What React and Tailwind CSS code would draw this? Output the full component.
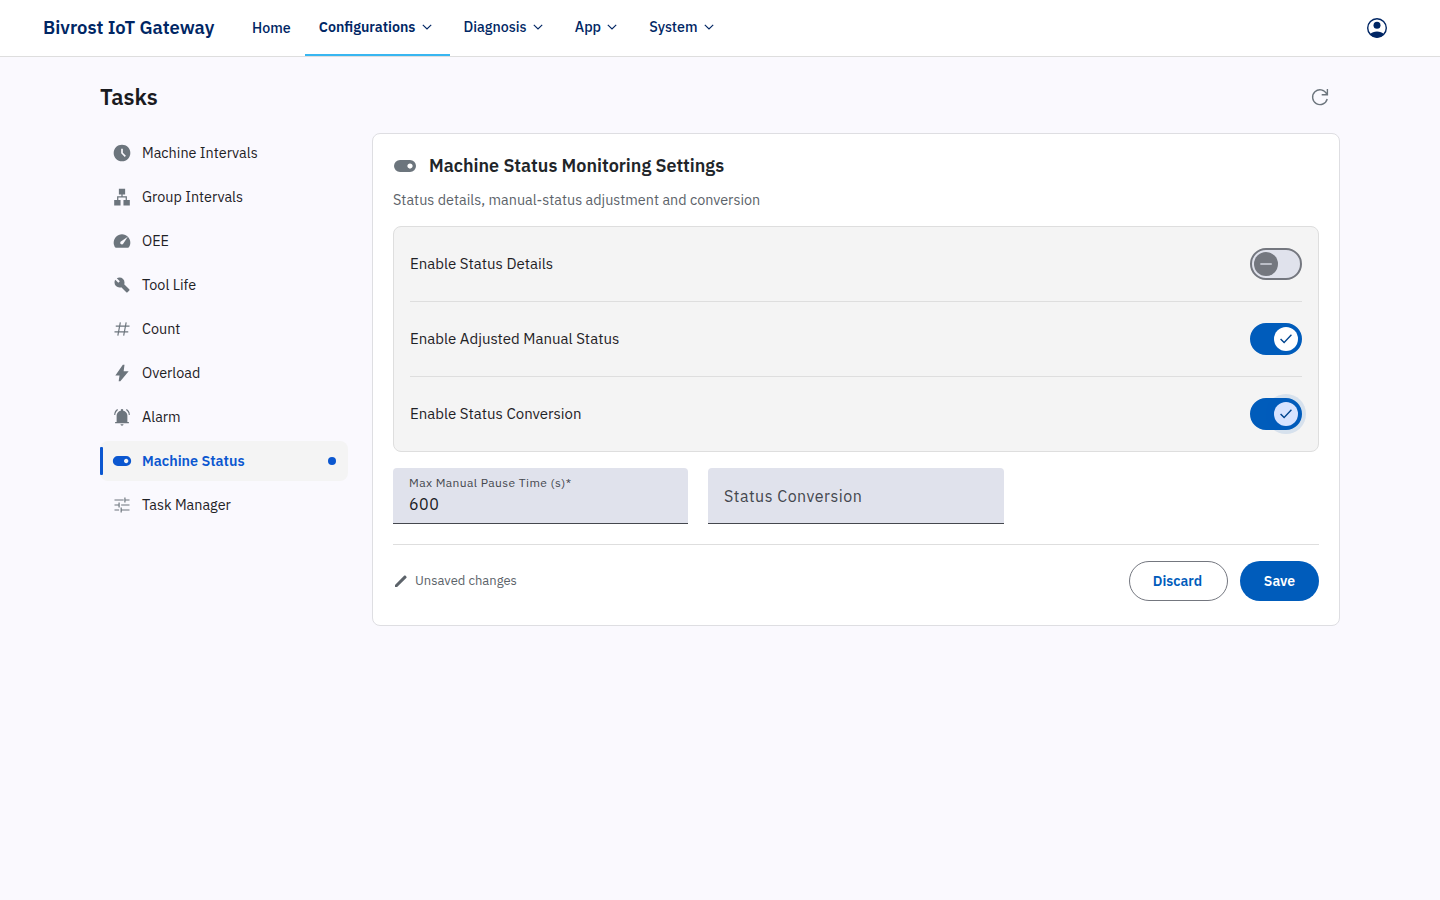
import { useState } from "react";
import clsx from "clsx";

// 960-unit glyphs, y axis runs from -960 to 0
const ICONS = {
  schedule:
    "m612-292 56-56-148-148v-184h-80v216l172 172ZM480-80q-83 0-156-31.5T197-197q-54-54-85.5-127T80-480q0-83 31.5-156T197-763q54-54 127-85.5T480-880q83 0 156 31.5T763-763q54 54 85.5 127T880-480q0 83-31.5 156T763-197q-54 54-127 85.5T480-80Z",
  lan: "M105-70v-270h140v-175h205v-85H330v-280h300v280H510v85h205v175h140v270H550v-270h105v-115H305v115h105v270H105Z",
  speed:
    "M418-340q24 24 62 23.5t56-27.5l224-336-336 224q-27 18-28.5 55t22.5 61ZM204-160q-22 0-40.5-9.5T134-198q-26-47-40-97.5T80-400q0-83 31.5-156T197-683q54-54 127-85.5T480-800t155.5 31.5T762-683t86 128 32 154q0 54-13 104t-41 97q-11 18-30 28.5T755-160H204Z",
  build:
    "M686-132 444-376q-20 8-40.5 12t-43.5 4q-100 0-170-70t-70-170q0-36 10-68.5t28-61.5l146 146 72-72-146-146q29-18 61.5-28t68.5-10q100 0 170 70t70 170q0 23-4 43.5T584-516l244 242q12 12 12 29t-12 29l-84 84q-12 12-29 12t-29-12Z",
  bolt: "m320-80 40-280H160l360-520h80l-40 320h240L400-80h-80Z",
  alarm:
    "M105-580q0-95 41-171T255-862l34 42q-58 43-93 106T155-580h-50Zm700 0q0-81-35-134T671-820l34-42q68 45 109 111t41 171h-50ZM150-180v-60h72v-310q0-85 55-150t146-82v-33q0-23 17-39t40-16 40 16 17 39v33q91 17 146 82t55 150v310h72v60H150ZM480-65q-30 0-51-21t-21-51h144q0 30-21 51t-51 21Z",
  toggle:
    "M280-240q-100 0-170-70T40-480t70-170 170-70h400q100 0 170 70t70 170-70 170-170 70H280Zm400-135q44 0 74.5-30.5T785-480t-30.5-74.5T680-585t-74.5 30.5T575-480t30.5 74.5T680-375Z",
  edit: "M120-120v-125l545-545q10-10 22-15t25-5q13 0 25 5t21 15l37 37q10 10 15 22t5 24q0 13-5 25.5T795-659L245-120H120Z",
};

// outline glyphs on a 24 grid
const LINES = {
  hash: "M4.5 8.5h16.500M3 15.500h16.500M10 4 7 20M17 4l-3 16",
  tune: "M3 6h11M15.5 3v6M15.5 6H21M3 12h5.5M8.5 9v6M11 12h10M3 18h5.5M11 15v6M11 18h10",
};

function Icon({ name, className }) {
  if (LINES[name]) {
    return (
      <svg viewBox="0 0 24 24" fill="none" stroke="currentColor" strokeWidth="1.4" className={className}>
        <path d={LINES[name]} />
      </svg>
    );
  }
  return (
    <svg viewBox="0 -960 960 960" fill="currentColor" className={className}>
      <path d={ICONS[name]} />
    </svg>
  );
}

const NAV = ["Configurations", "Diagnosis", "App", "System"];

const TASKS = [
  { label: "Machine Intervals", icon: "schedule" },
  { label: "Group Intervals", icon: "lan" },
  { label: "OEE", icon: "speed" },
  { label: "Tool Life", icon: "build" },
  { label: "Count", icon: "hash" },
  { label: "Overload", icon: "bolt" },
  { label: "Alarm", icon: "alarm" },
  { label: "Machine Status", icon: "toggle", dirty: true },
  { label: "Task Manager", icon: "tune" },
];

function NavBar() {
  return (
    <header className="flex h-[57px] items-stretch border-b border-[#dedede] bg-white pl-[43px] pr-[51px] text-[#002664]">
      <div className="flex w-[195px] items-center text-[18.4px] font-semibold">Bivrost IoT Gateway</div>
      <nav className="flex text-[14.25px] font-medium">
        <a className="flex w-[66.8px] items-center pl-3.5">Home</a>
        {NAV.map((item) => (
          <a
            key={item}
            className={clsx(
              "flex items-center gap-[2.1px] border-b-2 px-3.5",
              item === "Configurations" ? "border-[#38b6f1] font-semibold" : "border-transparent"
            )}
          >
            {item}
            <svg viewBox="0 0 18 18" fill="none" stroke="currentColor" strokeWidth="1.15" className="size-[18px]">
              <path d="m4.8 6.8 4.2 4.2 4.2-4.2" />
            </svg>
          </a>
        ))}
      </nav>
      <button className="ml-auto">
        <svg viewBox="0 0 24 24" fill="currentColor" className="size-6">
          <circle cx="12" cy="12" r="9.3" fill="none" stroke="currentColor" strokeWidth="1.4" />
          <circle cx="12" cy="9.3" r="3.5" />
          <path d="M5 18.2c1.700-1.700 4.200-2.600 7-2.600s5.300.9 7 2.600A9.300 9.300 0 0 1 12 21.500a9.300 9.300 0 0 1-7-3.300Z" />
        </svg>
      </button>
    </header>
  );
}

function Sidebar({ active, onSelect }) {
  return (
    <aside className="flex w-[248px] flex-col gap-1">
      {TASKS.map((t) => {
        const on = t.label === active;
        return (
          <button
            key={t.label}
            onClick={() => onSelect(t.label)}
            className={clsx(
              "flex h-10 items-center rounded-lg pr-3 text-left text-[14.4px]",
              on ? "bg-[#f4f4f4] font-semibold text-[#0b57d0]" : "text-[#1f2226]"
            )}
          >
            <span className={clsx("h-7 w-[3px] rounded-[1px]", on && "bg-[#0b57d0]")} />
            <Icon name={t.icon} className={clsx("ml-[9px] mr-2.5 size-5", !on && "text-[#6c757d]")} />
            {t.label}
            {t.dirty && <span className="ml-auto size-2 rounded-full bg-[#0b57d0]" />}
          </button>
        );
      })}
    </aside>
  );
}

function Toggle({ on, focused, onChange }) {
  return (
    <button
      role="switch"
      aria-checked={on}
      onClick={onChange}
      className={clsx(
        "flex h-8 w-[52px] items-center rounded-full border-2 px-0.5",
        on ? "justify-end border-[#005cbb] bg-[#005cbb]" : "border-[#74777f] bg-[#e0e2ec]"
      )}
    >
      <span
        className={clsx(
          "flex size-6 items-center justify-center rounded-full",
          !on && "bg-[#74777f] text-[#e0e2ec]",
          on && "text-[#00458f]",
          on && (focused ? "bg-[#d7e3ff] shadow-[0_0_0_8px_rgba(0,92,187,0.12)]" : "bg-white")
        )}
      >
        <svg viewBox="0 0 24 24" fill="currentColor" className="size-4">
          <path d={on ? "M9.2 18.8 3.100 12.700 4.600 11.200 9.200 15.800 19.400 5 20.900 6.500Z" : "M3.500 11h17v2h-17Z"} />
        </svg>
      </span>
    </button>
  );
}

function Settings() {
  const [flags, setFlags] = useState([
    { label: "Enable Status Details", on: false },
    { label: "Enable Adjusted Manual Status", on: true },
    { label: "Enable Status Conversion", on: true, focused: true },
  ]);

  const flip = (i) => setFlags(flags.map((f, j) => (j === i ? { ...f, on: !f.on } : f)));

  return (
    <section className="h-[493px] w-[968px] rounded-lg border border-[#dedee2] bg-white px-5 pt-5">
      <div className="flex h-6 items-center gap-3">
        <Icon name="toggle" className="size-6 text-[#6c757d]" />
        <h2 className="pb-0.5 text-[18px] font-semibold text-[#212529]">Machine Status Monitoring Settings</h2>
      </div>
      <p className="mt-[11px] text-[14.4px] leading-[22px] text-[#5c636a]">
        Status details, manual-status adjustment and conversion
      </p>

      <div className="mt-[15px] h-[226px] divide-y divide-[#dedede] rounded-lg border border-[#dedede] bg-[#f4f4f4] px-4">
        {flags.map((f, i) => (
          <div key={f.label} className="flex h-[75px] items-center justify-between text-[15px] leading-[22px] text-[#1f2226] last:h-[74px]">
            <span>{f.label}</span>
            <Toggle on={f.on} focused={f.focused} onChange={() => flip(i)} />
          </div>
        ))}
      </div>

      <div className="mt-4 grid grid-cols-[295px_296px] gap-5 tracking-[0.5px]">
        <label className="flex h-14 flex-col rounded-t border-b border-[#44474e] bg-[#e0e2ec] px-4 pt-[7px]">
          <span className="text-xs tracking-[0.4px] text-[#44474e]">Max Manual Pause Time (s)*</span>
          <span className="text-base leading-[26px] text-[#1a1b1f]">600</span>
        </label>
        <label className="flex h-14 items-center rounded-t border-b border-[#44474e] bg-[#e0e2ec] px-4 text-base text-[#44474e]">
          Status Conversion
        </label>
      </div>

      <div className="mt-5 flex items-center border-t border-[#dedede] pt-4">
        <Icon name="edit" className="size-4 text-[#5c636a]" />
        <span className="ml-1.5 text-[13px] text-[#5c636a]">Unsaved changes</span>
        <div className="ml-auto flex gap-3 text-sm">
          <button className="h-10 w-[99px] rounded-full border border-[#74777f] pr-0.5 font-semibold text-[#005cbb]">
            Discard
          </button>
          <button className="h-10 w-[79px] rounded-full bg-[#005cbb] font-semibold text-white">Save</button>
        </div>
      </div>
    </section>
  );
}

export default function App() {
  const [active, setActive] = useState("Machine Status");

  return (
    <div className="min-h-screen bg-[#faf9fe] font-['IBM_Plex_Sans',Roboto,sans-serif]">
      <NavBar />
      <main className="mx-auto w-[1240px] pt-5">
        <div className="flex h-10 items-center justify-between pr-[10px]">
          <h1 className="pb-0.5 text-[22px] font-semibold text-[#1a1b1f]">Tasks</h1>
          <button className="text-[#6c757d]">
            <svg viewBox="0 0 20 20" fill="none" stroke="currentColor" strokeWidth="1.4" className="size-5">
              <path d="M17.2 12a7.400 7.400 0 1 1-.6-5.200l.7.900M17.400 2v5.700h-5.700" />
            </svg>
          </button>
        </div>
        <div className="mt-4 flex items-start gap-6">
          <Sidebar active={active} onSelect={setActive} />
          <Settings />
        </div>
      </main>
    </div>
  );
}
